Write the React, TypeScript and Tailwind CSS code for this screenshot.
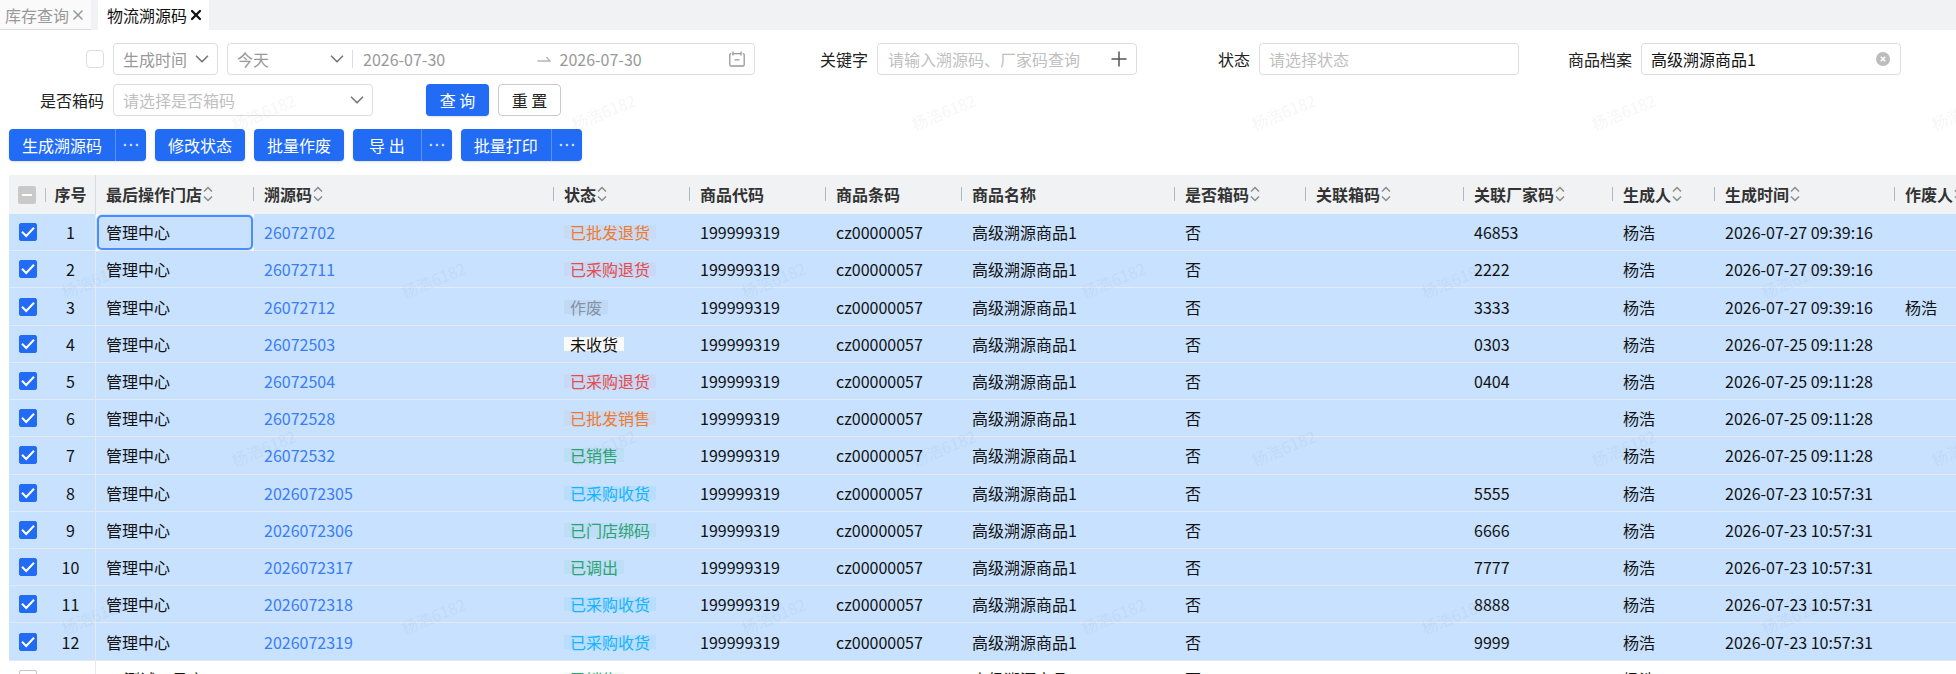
import React, { useState } from 'react';
import { ChevronDown, Plus, X } from 'lucide-react';
import { clsx } from 'clsx';

type Tone = 'orange' | 'red' | 'gray' | 'plain' | 'green' | 'cyan';

interface Row {
    store: string;
    code: string;
    status: string;
    tone: Tone;
    factory: string;
    time: string;
    voidBy?: string;
    checked: boolean;
}

const TONES: Record<Tone, string> = {
    orange: 'text-[#ed7b2f] bg-[#ed7b2f]/6',
    red: 'text-[#e34d4d] bg-[#e34d4d]/6',
    gray: 'text-[#8592a3] bg-[#8c9099]/10',
    plain: 'text-[#111] bg-[#fafafa]',
    green: 'text-[#2ba471] bg-[#2ba471]/6',
    cyan: 'text-[#14b4ff] bg-[#14b4ff]/8',
};

const ROWS: Row[] = [
    { store: '管理中心', code: '26072702', status: '已批发退货', tone: 'orange', factory: '46853', time: '2026-07-27 09:39:16', checked: true },
    { store: '管理中心', code: '26072711', status: '已采购退货', tone: 'red', factory: '2222', time: '2026-07-27 09:39:16', checked: true },
    { store: '管理中心', code: '26072712', status: '作废', tone: 'gray', factory: '3333', time: '2026-07-27 09:39:16', voidBy: '杨浩', checked: true },
    { store: '管理中心', code: '26072503', status: '未收货', tone: 'plain', factory: '0303', time: '2026-07-25 09:11:28', checked: true },
    { store: '管理中心', code: '26072504', status: '已采购退货', tone: 'red', factory: '0404', time: '2026-07-25 09:11:28', checked: true },
    { store: '管理中心', code: '26072528', status: '已批发销售', tone: 'orange', factory: '', time: '2026-07-25 09:11:28', checked: true },
    { store: '管理中心', code: '26072532', status: '已销售', tone: 'green', factory: '', time: '2026-07-25 09:11:28', checked: true },
    { store: '管理中心', code: '2026072305', status: '已采购收货', tone: 'cyan', factory: '5555', time: '2026-07-23 10:57:31', checked: true },
    { store: '管理中心', code: '2026072306', status: '已门店绑码', tone: 'green', factory: '6666', time: '2026-07-23 10:57:31', checked: true },
    { store: '管理中心', code: '2026072317', status: '已调出', tone: 'green', factory: '7777', time: '2026-07-23 10:57:31', checked: true },
    { store: '管理中心', code: '2026072318', status: '已采购收货', tone: 'cyan', factory: '8888', time: '2026-07-23 10:57:31', checked: true },
    { store: '管理中心', code: '2026072319', status: '已采购收货', tone: 'cyan', factory: '9999', time: '2026-07-23 10:57:31', checked: true },
    { store: '01测试一号店', code: '', status: '已销售', tone: 'green', factory: '', time: '', checked: false },
];

const COLUMNS = [
    { title: '最后操作门店', width: 'w-[158px]', sortable: true },
    { title: '溯源码', width: 'w-[300px]', sortable: true },
    { title: '状态', width: 'w-[136px]', sortable: true },
    { title: '商品代码', width: 'w-[136px]' },
    { title: '商品条码', width: 'w-[136px]' },
    { title: '商品名称', width: 'w-[213px]' },
    { title: '是否箱码', width: 'w-[131px]', sortable: true },
    { title: '关联箱码', width: 'w-[158px]', sortable: true },
    { title: '关联厂家码', width: 'w-[149px]', sortable: true },
    { title: '生成人', width: 'w-[102px]', sortable: true },
    { title: '生成时间', width: 'w-[180px]', sortable: true },
    { title: '作废人', width: 'w-[136px]', sortable: true },
];

const FIELD = 'h-8 rounded border border-[#dcdde0] bg-white';

function SortIcon() {
    return (
        <svg width="10" height="16" viewBox="0 0 10 16" fill="none" stroke="#8c8c8c" strokeWidth="1.5" className="shrink-0">
            <path d="M1 5.5 5 1.5l4 4M1 10.5l4 4 4-4" />
        </svg>
    );
}

function CalendarIcon() {
    return (
        <svg width="16" height="16" viewBox="0 0 16 16" fill="none" stroke="#999" strokeWidth="1.3" className="shrink-0">
            <path d="M2.2 2.6h-.2a1.2 1.2 0 0 0-1.2 1.2v10a1.2 1.2 0 0 0 1.2 1.2h12a1.2 1.2 0 0 0 1.2-1.2v-10a1.2 1.2 0 0 0-1.2-1.2h-.2M3.8 2.6h8.4" />
            <path d="M4 0.4v4.2M12 0.4v4.2M5.5 8.8h5" />
        </svg>
    );
}

function Dots() {
    return (
        <svg width="16" height="4" viewBox="0 0 16 4" fill="#c9dcff">
            <circle cx="2" cy="2" r="1.3" />
            <circle cx="8" cy="2" r="1.3" />
            <circle cx="14" cy="2" r="1.3" />
        </svg>
    );
}

function Tick({ label, checked, onChange }: { label: string; checked: boolean; onChange: () => void }) {
    return (
        <label className="mx-auto grid w-[18px] cursor-pointer">
            <input
                type="checkbox"
                aria-label={label}
                checked={checked}
                onChange={onChange}
                className="peer col-start-1 row-start-1 size-[18px] appearance-none rounded-[2px] border border-[#c4c6cc] bg-white checked:border-[#226cf5] checked:bg-[#226cf5]"
            />
            <svg viewBox="0 0 18 18" fill="none" stroke="#fff" strokeWidth="2" className="pointer-events-none invisible col-start-1 row-start-1 size-[18px] peer-checked:visible">
                <path d="M3 8.7 7.2 13 15 4.8" />
            </svg>
        </label>
    );
}

function Label({ htmlFor, children }: { htmlFor: string; children: React.ReactNode }) {
    return (
        <label htmlFor={htmlFor} className="w-[95px] shrink-0 text-right text-[#222]">
            {children}
        </label>
    );
}

function SelectBox({ id, label, className, options, tone = 'text-[#999]' }: {
    id: string;
    label?: string;
    className: string;
    options: string[];
    tone?: string;
}) {
    return (
        <div className={clsx('grid items-center', className)}>
            <select id={id} aria-label={label} className={clsx('col-start-1 row-start-1 h-full w-full appearance-none bg-transparent pl-[9px] outline-none', tone)}>
                {options.map((o) => <option key={o}>{o}</option>)}
            </select>
            <ChevronDown size={22} strokeWidth={1.8} className="pointer-events-none col-start-1 row-start-1 mr-1 justify-self-end text-[#777]" />
        </div>
    );
}

function ActionButton({ text, more = false, className = 'px-[13px]' }: { text: string; more?: boolean; className?: string }) {
    return (
        <div className="flex h-8 overflow-hidden rounded bg-[#226cf5] text-white shadow-sm">
            <button type="button" className={clsx('whitespace-nowrap', className)}>{text}</button>
            {more && (
                <button type="button" aria-label={`${text}更多`} className="flex w-[31px] items-center justify-center border-l border-[#5a92f8]">
                    <Dots />
                </button>
            )}
        </div>
    );
}

function Watermark() {
    return (
        <svg aria-hidden="true" className="pointer-events-none absolute inset-0 h-full w-full">
            <defs>
                <pattern id="wm" width="340" height="336" patternUnits="userSpaceOnUse">
                    <g fill="#000" fillOpacity="0.035" fontSize="16" textAnchor="middle">
                        <text transform="translate(266 118) rotate(-22)">杨浩6182</text>
                        <text transform="translate(96 286) rotate(-22)">杨浩6182</text>
                    </g>
                </pattern>
            </defs>
            <rect width="100%" height="100%" fill="url(#wm)" />
        </svg>
    );
}

export default function App() {
    const [rows, setRows] = useState(ROWS);
    const [byTime, setByTime] = useState(false);

    const toggle = (index: number) => {
        setRows(rows.map((r, i) => (i === index ? { ...r, checked: !r.checked } : r)));
    };

    return (
        <div className="relative flex h-screen flex-col overflow-hidden bg-white font-['Noto_Sans_CJK_SC',sans-serif] text-base text-[#111]">
            {/* Page tabs */}
            <nav className="flex h-[30px] shrink-0 items-stretch gap-[7px] bg-[#f1f2f4]">
                <div className="flex items-center gap-px border-b border-[#d9dadd] bg-[#fafafa] pr-[5px] pl-[5px] text-[#999]">
                    <a href="#stock">库存查询</a>
                    <button type="button" aria-label="关闭库存查询"><X size={16} strokeWidth={2.4} /></button>
                </div>
                <div className="flex items-center gap-px bg-white pr-[5px] pl-[9px] text-[#111]">
                    <a href="#trace" aria-current="page">物流溯源码</a>
                    <button type="button" aria-label="关闭物流溯源码"><X size={16} strokeWidth={3.4} /></button>
                </div>
            </nav>

            {/* Filters */}
            <form className="grid shrink-0 grid-cols-5 gap-y-[9px] pt-[13px] pr-[37px] pl-[9px]">
                <div className="col-span-2 flex items-center gap-[9px] pr-[18px]">
                    <div className="flex w-[95px] shrink-0 justify-end">
                        <input
                            type="checkbox"
                            aria-label="按时间查询"
                            checked={byTime}
                            onChange={() => setByTime(!byTime)}
                            className="size-[18px] appearance-none rounded border border-[#dcdde0] bg-white checked:bg-[#226cf5]"
                        />
                    </div>
                    <SelectBox id="time-type" label="时间类型" className={clsx(FIELD, 'w-[105px] shrink-0')} options={['生成时间']} />
                    <div className={clsx(FIELD, 'flex min-w-0 flex-1 items-center text-[#999]')}>
                        <SelectBox id="time-range" label="时间范围" className="h-full w-[124px] shrink-0" options={['今天']} />
                        <span className="h-[18px] w-px shrink-0 bg-[#dcdde0]" />
                        <input aria-label="开始日期" defaultValue="2026-07-30" className="min-w-0 flex-1 pl-[10px] outline-none" />
                        <svg width="14" height="8" viewBox="0 0 14 8" fill="none" stroke="#b5b5b5" strokeWidth="1.3" className="ml-1 shrink-0">
                            <path d="M0.5 6h12.5L9.5 2" />
                        </svg>
                        <input aria-label="结束日期" defaultValue="2026-07-30" className="min-w-0 flex-1 pl-[9px] outline-none" />
                        <span className="mr-[9px]"><CalendarIcon /></span>
                    </div>
                </div>
                <div className="flex items-center gap-[9px] pr-[18px]">
                    <Label htmlFor="keyword">关键字</Label>
                    <div className={clsx(FIELD, 'flex min-w-0 flex-1 items-center')}>
                        <input id="keyword" placeholder="请输入溯源码、厂家码查询" className="min-w-0 flex-1 pl-[10px] outline-none placeholder:text-[#bfbfbf]" />
                        <button type="button" aria-label="批量输入" className="mr-[5px] text-[#555]"><Plus size={24} strokeWidth={1.5} /></button>
                    </div>
                </div>
                <div className="flex items-center gap-[9px] pr-[18px]">
                    <Label htmlFor="status">状态</Label>
                    <input id="status" placeholder="请选择状态" className={clsx(FIELD, 'min-w-0 flex-1 px-[9px] outline-none placeholder:text-[#bfbfbf]')} />
                </div>
                <div className="flex items-center gap-[9px] pr-[18px]">
                    <Label htmlFor="product">商品档案</Label>
                    <div className={clsx(FIELD, 'flex min-w-0 flex-1 items-center')}>
                        <input id="product" defaultValue="高级溯源商品1" className="min-w-0 flex-1 pl-[9px] text-[#111] outline-none" />
                        <button type="button" aria-label="清除" className="mr-[10px]">
                            <svg width="14" height="14" viewBox="0 0 14 14">
                                <circle cx="7" cy="7" r="7" fill="#bcbcbc" />
                                <path d="m4.8 4.8 4.4 4.4M9.2 4.8 4.8 9.2" stroke="#fff" strokeWidth="1.6" />
                            </svg>
                        </button>
                    </div>
                </div>
                <div className="flex items-center gap-[9px] pr-[18px]">
                    <Label htmlFor="is-box">是否箱码</Label>
                    <SelectBox id="is-box" className={clsx(FIELD, 'min-w-0 flex-1')} options={['请选择是否箱码']} tone="text-[#bfbfbf]" />
                </div>
                <div className="flex gap-[9px] pl-[35px]">
                    <button type="button" className="h-8 w-[63px] rounded bg-[#226cf5] text-white shadow-sm">查 询</button>
                    <button type="reset" className="h-8 w-[63px] rounded border border-[#c9cacc] bg-white text-[#222]">重 置</button>
                </div>
            </form>

            {/* Actions */}
            <div className="flex shrink-0 gap-[9px] px-[9px] pt-[13px] pb-[14px]">
                <ActionButton text="生成溯源码" more />
                <ActionButton text="修改状态" />
                <ActionButton text="批量作废" />
                <ActionButton text="导 出" more className="px-4" />
                <ActionButton text="批量打印" more />
            </div>

            {/* Trace code list */}
            <div className="min-h-0 flex-1 overflow-hidden pl-[9px]">
                <table className="h-[523px] w-[2022px] table-fixed border-separate border-spacing-0 whitespace-nowrap">
                    <thead>
                        <tr className="h-[39px] bg-[#f1f2f4] text-left text-[#333]">
                            <th className="w-[37px] p-0">
                                <div className="flex items-center justify-between pl-[9px]">
                                    <button type="button" aria-label="全选" className="flex size-[18px] items-center justify-center rounded-[2px] bg-[#c9c9c9]">
                                        <span className="h-[2px] w-[10px] bg-white" />
                                    </button>
                                    <span className="h-[14px] w-px bg-[#b9bdc7]" />
                                </div>
                            </th>
                            <th className="w-[50px] border-r border-[#d9dce2] p-0 pb-[2px] text-center font-semibold">序号</th>
                            {COLUMNS.map((c) => (
                                <th key={c.title} className={clsx('p-0 pb-[2px] font-semibold', c.width)}>
                                    <div className="flex items-center pl-[10px]">
                                        <span>{c.title}</span>
                                        {c.sortable && <button type="button" aria-label={`${c.title}排序`} className="ml-px"><SortIcon /></button>}
                                        <span className="ml-auto h-[14px] w-px bg-[#b0b5c2]" />
                                    </div>
                                </th>
                            ))}
                        </tr>
                    </thead>
                    <tbody>
                        {rows.map((row, i) => (
                            <tr
                                key={i}
                                className={clsx(
                                    '[&>td]:border-b [&>td]:border-[#e4e9f2] [&>td]:p-0 [&>td]:pl-[10px]',
                                    row.checked && 'bg-[#c7e1ff]',
                                )}
                            >
                                <td className="pl-0!"><Tick label={`选择第${i + 1}行`} checked={row.checked} onChange={() => toggle(i)} /></td>
                                <td className="border-r pl-0! text-center">{i + 1}</td>
                                <td className={clsx(i === 0 && 'rounded-md outline-2 -outline-offset-3 outline-[#4b8dfb]')}>{row.store}</td>
                                <td><a href={`#${row.code}`} className="text-[#3b7cf7]">{row.code}</a></td>
                                <td>
                                    <div className="flex">
                                        <span className={clsx('px-[6px] leading-[14px]', TONES[row.tone])}>{row.status}</span>
                                    </div>
                                </td>
                                <td>199999319</td>
                                <td>cz00000057</td>
                                <td>高级溯源商品1</td>
                                <td>否</td>
                                <td />
                                <td>{row.factory}</td>
                                <td>杨浩</td>
                                <td>{row.time}</td>
                                <td>{row.voidBy}</td>
                            </tr>
                        ))}
                    </tbody>
                </table>
            </div>

            <Watermark />
        </div>
    );
}
